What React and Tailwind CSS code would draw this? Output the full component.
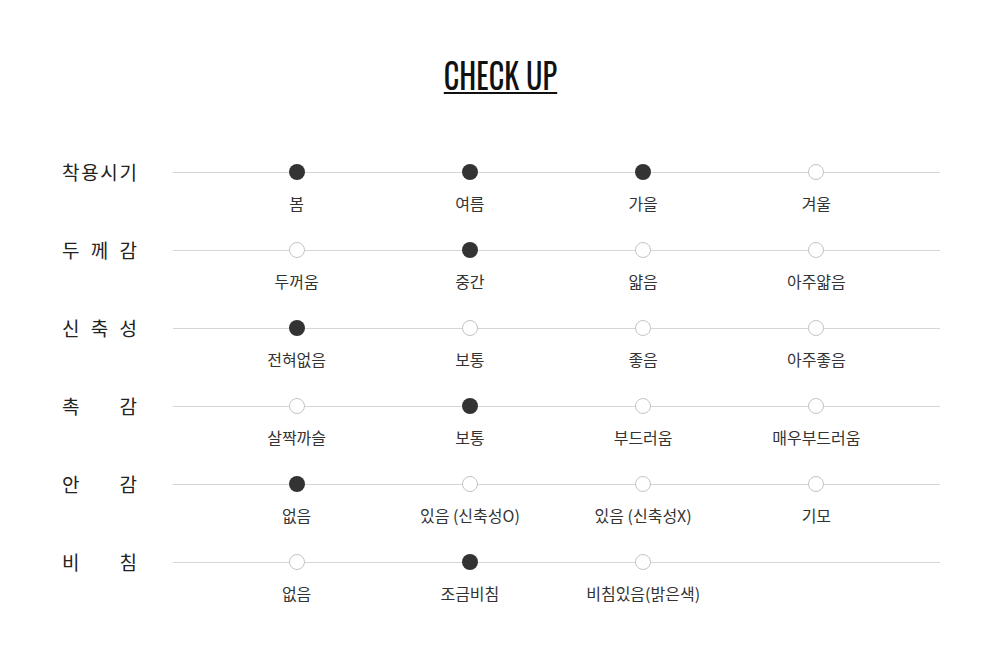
import React from 'react'

const rows = [
  { label: ['착', '용', '시', '기'], items: [['봄', true], ['여름', true], ['가을', true], ['겨울', false]] },
  { label: ['두', '께', '감'], items: [['두꺼움', false], ['중간', true], ['얇음', false], ['아주얇음', false]] },
  { label: ['신', '축', '성'], items: [['전혀없음', true], ['보통', false], ['좋음', false], ['아주좋음', false]] },
  { label: ['촉', '감'], items: [['살짝까슬', false], ['보통', true], ['부드러움', false], ['매우부드러움', false]] },
  { label: ['안', '감'], items: [['없음', true], ['있음 (신축성O)', false], ['있음 (신축성X)', false], ['기모', false]] },
  { label: ['비', '침'], items: [['없음', false], ['조금비침', true], ['비침있음(밝은색)', false]] },
]

const kr = { fontFamily: '"Noto Sans CJK KR", "Noto Sans", sans-serif' }

const App = () => {
  return (
    <div className="min-h-[661px] w-full bg-white text-[#222]" style={kr}>
      <div className="flex justify-center pt-[56px]">
        <h2
          className="origin-center scale-x-[0.84] border-b-2 border-[#111] text-[36px] font-normal leading-none text-[#111]"
          style={{ fontFamily: 'Oswald, "Liberation Sans Narrow", "DejaVu Sans Condensed", "Liberation Sans", sans-serif' }}
        >
          CHECK UP
        </h2>
      </div>

      <div className="mt-[70px] flex flex-col">
        {rows.map((row, i) => (
          <div key={i} className="flex h-[78px] pl-[62px]">
            <div className="flex h-4 w-[75px] items-center justify-between text-[19px] leading-4 text-[#222]">
              {row.label.map((ch, j) => (
                <span key={j}>{ch}</span>
              ))}
            </div>
            <div className="ml-[36px] w-[767px]">
              <div className="relative h-4">
                <div className="absolute left-0 right-0 top-[7.5px] h-px bg-[#d6d6d6]" />
                <div className="relative grid h-4 grid-cols-4 px-[37px]">
                  {row.items.map(([name, on], j) => (
                    <div key={j} className="flex justify-center">
                      <span
                        className={
                          on
                            ? 'block h-4 w-4 rounded-full bg-[#333]'
                            : 'block h-4 w-4 rounded-full border border-[#c4c4c4] bg-white'
                        }
                      />
                    </div>
                  ))}
                </div>
              </div>
              <div className="mt-[13px] grid grid-cols-4 px-[37px] text-[16px] leading-5 text-[#333]">
                {row.items.map(([name], j) => (
                  <div key={j} className="text-center whitespace-nowrap">{name}</div>
                ))}
              </div>
            </div>
          </div>
        ))}
      </div>
    </div>
  )
}

export default App
